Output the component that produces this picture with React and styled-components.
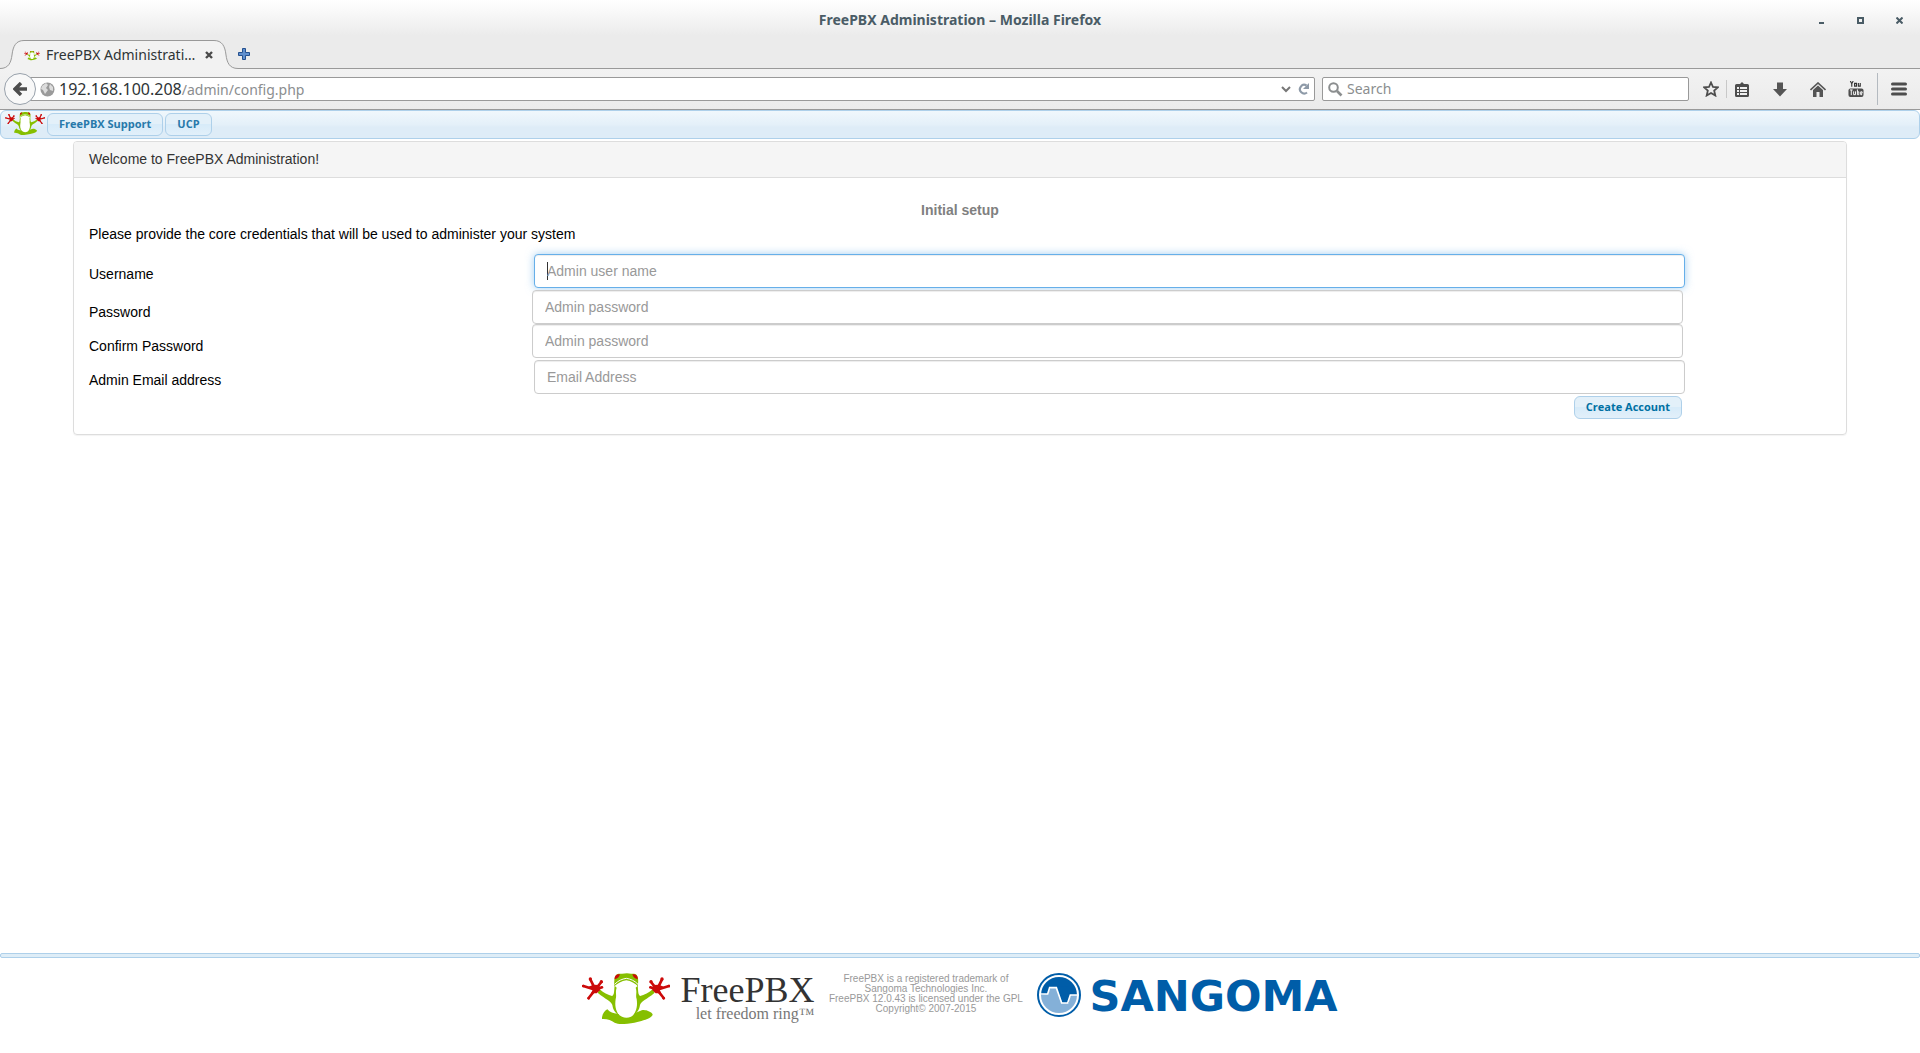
import React from 'react';
import styled, { createGlobalStyle, css } from 'styled-components';

const GlobalStyle = createGlobalStyle`
  * {
    box-sizing: border-box;
  }

  body {
    margin: 0;
    background-color: #fff;
    color: #000;
    font-family: 'Liberation Sans', Arial, sans-serif;
    font-size: 14px;
    line-height: 20px;
  }

  button,
  input {
    font-family: inherit;
  }
`;

const uiFont = "'Noto Sans', 'Open Sans', sans-serif";

const Window = styled.div`
  display: flex;
  flex-direction: column;
  min-height: 100vh;
`;

/* Browser chrome */

const Chrome = styled.header`
  background: linear-gradient(#fff 0, #ebebeb 36px);
  color: #2e3436;
  font-family: ${uiFont};
`;

const TitleBar = styled.div`
  display: grid;
  grid-template-columns: 1fr auto 1fr;
  align-items: center;
  height: 40px;
`;

const WindowTitle = styled.h1`
  grid-column: 2;
  margin: 0;
  color: #4a5c66;
  font-size: 14px;
  font-weight: 700;
  line-height: 40px;
`;

const WindowButtons = styled.div`
  display: flex;
  justify-content: flex-end;
  gap: 23px;
  padding-right: 13px;
`;

const IconButton = styled.button`
  display: flex;
  align-items: center;
  justify-content: center;
  width: ${({ $size }) => $size || 16}px;
  height: ${({ $size }) => $size || 16}px;
  padding: 0;
  border: 0;
  background: none;
  color: #4d4d4d;
`;

const TabStrip = styled.div`
  display: flex;
  align-items: stretch;
  height: 29px;
`;

const NewTabArea = styled.div`
  flex: 1;
  display: flex;
  align-items: center;
  border-bottom: 1px solid #999;
`;

const Tab = styled.div`
  display: flex;
  align-items: center;
  width: 190px;
  border-top: 1px solid #999;
  background: #f2f2f2;
`;

const TabLabel = styled.span`
  flex: 1;
  margin-left: 6px;
  font-size: 14px;
  line-height: 28px;
  white-space: nowrap;
`;

const NavBar = styled.div`
  display: flex;
  align-items: center;
  height: 41px;
  padding: 0 13px 0 4px;
  border-bottom: 1px solid #999;
  background: linear-gradient(#f2f2f2, #ebebeb);
`;

const BackButton = styled.button`
  z-index: 1;
  display: flex;
  align-items: center;
  justify-content: center;
  width: 32px;
  height: 32px;
  padding: 0;
  border: 1px solid #98a1ab;
  border-radius: 50%;
  background: #f8f8f8;
  color: #4d4d4d;
`;

const FieldBox = styled.div`
  display: flex;
  align-items: center;
  height: 24px;
  border: 1px solid #999;
  border-radius: 2px;
  background: #fff;
`;

const UrlBox = styled(FieldBox)`
  flex: 1;
  gap: 4px;
  margin-left: -7px;
  padding: 0 4px 0 10px;
`;

const Url = styled.span`
  flex: 1;
  font-size: 16px;
  line-height: 22px;
  color: #2e3436;
`;

const UrlPath = styled.span`
  color: #8b8e8f;
  font-size: 14px;
`;

const SearchBox = styled(FieldBox)`
  width: 367px;
  margin-left: 7px;
  padding: 0 5px;
  gap: 4px;
`;

const SearchInput = styled.input`
  flex: 1;
  min-width: 0;
  padding: 0;
  border: 0;
  outline: 0;
  background: none;
  font-size: 14px;
  line-height: 22px;

  &::placeholder {
    color: #8b8e8f;
    opacity: 1;
  }
`;

const Tools = styled.div`
  display: flex;
  align-items: center;
  gap: 22px;
  margin-left: 14px;
`;

const ToolGroup = styled.div`
  display: flex;
  align-items: center;
  gap: ${({ $gap }) => $gap}px;
`;

const Separator = styled.div`
  width: 1px;
  height: ${({ $tall }) => ($tall ? 32 : 18)}px;
  background: ${({ $tall }) => ($tall ? '#b4bac0' : '#c8c8c8')};
`;

/* FreePBX page */

const MenuBar = styled.nav`
  display: flex;
  align-items: flex-start;
  gap: 2px;
  height: 29px;
  padding: 1px 4px;
  border: 1px solid #aed0ea;
  border-radius: 6px;
  background: linear-gradient(#f0f7fc 0, #e4f0f9 50%, #deecf7 60%, #deecf7);
`;

const blueButton = css`
  border: 1px solid #aed0ea;
  border-radius: 6px;
  background: linear-gradient(#e3f0f9 0, #e3f0f9 49%, #d7ebf9 50%, #e2f0fa);
  font-family: 'Open Sans', 'Noto Sans', sans-serif;
  font-size: 11px;
  font-weight: 700;
  line-height: 20px;
`;

const MenuLink = styled.a`
  ${blueButton}
  margin-top: 1px;
  padding: 0 11px 1px;
  color: #2779aa;
  text-decoration: none;
`;

const Content = styled.main`
  flex: 1;
  padding: 2px 73px 20px;
`;

const Panel = styled.section`
  border: 1px solid #ddd;
  border-radius: 4px;
  box-shadow: 0 1px 1px rgba(0, 0, 0, 0.05);
`;

const PanelHeading = styled.div`
  padding: 7px 15px 8px;
  border-bottom: 1px solid #ddd;
  border-radius: 3px 3px 0 0;
  background: #f5f5f5;
  color: #333;
`;

const PanelBody = styled.form`
  padding: 22px 15px 15px;
`;

const FormTitle = styled.h2`
  margin: 0;
  color: #808080;
  font-size: 14px;
  font-weight: 700;
  line-height: 20px;
  text-align: center;
`;

const Intro = styled.p`
  margin: 4px 0 8px;
`;

const Row = styled.div`
  display: grid;
  grid-template-columns: 443fr 1151fr 148fr;
  align-items: start;
`;

const Label = styled.label`
  padding-top: 12px;
`;

const TextInput = styled.input`
  width: 100%;
  height: 34px;
  padding: 6px 12px;
  border: 1px solid #ccc;
  border-radius: 4px;
  outline: 0;
  background: #fff;
  box-shadow: inset 0 1px 1px rgba(0, 0, 0, 0.075);
  color: #555;
  font-size: 14px;
  line-height: 20px;

  ${({ $inset }) => $inset && css`
    margin: 2px 0 2px 2px;
  `}

  &::placeholder {
    color: #999;
    opacity: 1;
  }

  &:focus {
    border-color: #66afe9;
    /* thin caret at the start of the empty field */
    background: linear-gradient(#333, #333) 12px center / 1px 18px no-repeat #fff;
    box-shadow: inset 0 1px 1px rgba(0, 0, 0, 0.075), 0 0 8px rgba(102, 175, 233, 0.6);
    caret-color: transparent;
  }

  &:focus:not(:placeholder-shown) {
    background: #fff;
    caret-color: auto;
  }
`;

const SubmitButton = styled.button`
  ${blueButton}
  grid-column: 2;
  justify-self: end;
  margin-right: 1px;
  padding: 0 11px 1px;
  color: #0070a3;
`;

const FooterRule = styled.div`
  height: 5px;
  border: 1px solid #aed0ea;
  border-radius: 2px;
  background: #deedf7;
`;

const Footer = styled.footer`
  display: flex;
  align-items: flex-start;
  justify-content: center;
  gap: 10px;
  height: 95px;
  padding-top: 15px;
`;

const Brand = styled.div`
  display: flex;
  gap: 10px;
`;

const BrandText = styled.div`
  padding-top: 1px;
  font-family: 'Liberation Serif', 'Times New Roman', serif;
  text-align: right;
`;

const BrandName = styled.div`
  color: #333;
  font-size: 36px;
  line-height: 32px;
`;

const Tagline = styled.div`
  color: #777;
  font-size: 16px;
  line-height: 16px;
`;

const Legal = styled.p`
  min-width: 203px;
  margin: 1px 0 0;
  color: #999;
  font-size: 10px;
  line-height: 10px;
  text-align: center;
`;

const Sangoma = styled.div`
  display: flex;
  align-items: flex-start;
  gap: 8px;
  color: #005da8;
  font-family: 'DejaVu Sans', sans-serif;
  font-size: 43px;
  font-weight: 700;
  line-height: 46px;
`;

const Hand = () => (
  <g>
    <path d="M40 50L4 39M40 50L25 19M40 50L58 27M40 50L60 43M40 50L20 75" stroke="#cc0a0a" strokeWidth="8" strokeLinecap="round" />
    <path d="M20 41L34 35L52 36L54 52L44 61L27 61L33 49Z" fill="#cc0a0a" />
    <circle cx="4" cy="39" r="4" fill="#cc0a0a" />
    <circle cx="25" cy="18" r="5" fill="#cc0a0a" />
    <circle cx="58" cy="26" r="5" fill="#cc0a0a" />
    <circle cx="20" cy="76" r="4" fill="#cc0a0a" />
  </g>
);

const Arm = () => (
  <path
    d="M53 49C62 58 80 67 90 69C98 66 96 50 98 38L104 44C99 58 105 66 101 78C98 98 101 112 111 127C97 118 93 108 91 96C88 84 72 80 47 59Z"
    fill="#86bf00"
  />
);

const Frog = ({ width, height }) => (
  <svg width={width} height={height} viewBox="0 0 264 153" fill="none" aria-hidden="true">
    <path d="M60 133C62 120 70 112 76 109C84 119 94 121 106 122C130 128 156 124 172 115C182 109 188 111 193 112C202 116 212 119 212 126C203 139 184 142 166 147C146 153 112 156 98 149C88 142 76 137 60 138Z" fill="#86bf00" />
    <path d="M104 38C94 56 95 84 98 98C102 116 110 126 120 131Q133 137 147 131C157 126 165 112 168 98C170 84 172 56 161 38C148 14 118 14 104 38Z" fill="#fff" />
    <Arm />
    <g transform="translate(265 0) scale(-1 1)">
      <Arm />
    </g>
    <path d="M97 40C97 28 95 14 103 5C110 0 117 4 120 2C130 0 140 0 147 2C152 3 158 0 164 6C171 16 168 28 168 40C160 32 147 24 133 22C119 24 106 32 97 40Z" fill="#86bf00" />
    <path d="M98 34C108 23 120 18 133 16C146 18 158 23 168 34" stroke="#fff" strokeWidth="3" />
    <path d="M98 19C97 8 104 3 114 4C112 12 107 17 98 19Z" fill="#cc0a0a" />
    <path d="M167 19C168 8 161 3 151 4C153 12 158 17 167 19Z" fill="#cc0a0a" />
    <Hand />
    <g transform="translate(265 0) scale(-1 1)">
      <Hand />
    </g>
  </svg>
);

const TabCurve = ({ flip }) => (
  <svg width="24" height="29" viewBox="0 0 24 29" transform={flip ? 'scale(-1 1)' : undefined} aria-hidden="true">
    <path d="M0 28.500C9 28.500 11 22 12 15C13 6 16 0.500 24 0.500V29H0Z" fill="#f2f2f2" />
    <path d="M0 28.500C9 28.500 11 22 12 15C13 6 16 0.500 24 0.500" fill="none" stroke="#999" />
  </svg>
);

const fields = [
  { id: 'username', label: 'Username', placeholder: 'Admin user name', type: 'text', inset: true, focus: true },
  { id: 'password1', label: 'Password', placeholder: 'Admin password', type: 'password' },
  { id: 'password2', label: 'Confirm Password', placeholder: 'Admin password', type: 'password' },
  { id: 'email', label: 'Admin Email address', placeholder: 'Email Address', type: 'text', inset: true },
];

const BrowserChrome = () => (
  <Chrome>
    <TitleBar>
      <WindowTitle>FreePBX Administration – Mozilla Firefox</WindowTitle>
      <WindowButtons>
        <IconButton aria-label="Minimize">
          <svg width="7" height="7"><path d="M1 5h5v2H1z" fill="#4a5c66" /></svg>
        </IconButton>
        <IconButton aria-label="Maximize">
          <svg width="7" height="7"><path d="M1 1h5v5H1z" fill="none" stroke="#4a5c66" strokeWidth="2" /></svg>
        </IconButton>
        <IconButton aria-label="Close window">
          <svg width="7" height="7"><path d="M0.500 0.500L6.500 6.500M6.500 0.500L0.500 6.500" stroke="#4a5c66" strokeWidth="2" /></svg>
        </IconButton>
      </WindowButtons>
    </TitleBar>
    <TabStrip>
      <TabCurve />
      <Tab>
        <Frog width={16} height={11} />
        <TabLabel>FreePBX Administrati…</TabLabel>
        <IconButton aria-label="Close tab" $size={10}>
          <svg width="8" height="8"><path d="M1 1L7 7M7 1L1 7" stroke="#4a4a4a" strokeWidth="2.400" /></svg>
        </IconButton>
      </Tab>
      <TabCurve flip />
      <NewTabArea>
        <IconButton aria-label="New tab" $size={12}>
          <svg width="12" height="12"><path d="M4.500 0.500h3v4h4v3h-4v4h-3v-4h-4v-3h4z" fill="#5f8fce" stroke="#24508f" /></svg>
        </IconButton>
      </NewTabArea>
    </TabStrip>
    <NavBar>
      <BackButton aria-label="Back">
        <svg width="14" height="14"><path d="M8 1L2 7L8 13M2 7H14" fill="none" stroke="currentColor" strokeWidth="3.400" /></svg>
      </BackButton>
      <UrlBox>
        <svg width="15" height="15" viewBox="0 0 15 15">
          <circle cx="7.500" cy="7.500" r="7" fill="#9a9a9a" />
          <path d="M2 4L6 1L8 3L6 6L8 8L5 12L3 8L1 7ZM10 2L13 5L13 9L10 8L9 5Z" fill="#dcdcdc" />
        </svg>
        <Url>192.168.100.208<UrlPath>/admin/config.php</UrlPath></Url>
        <IconButton aria-label="Show history" $size={14}>
          <svg width="10" height="7"><path d="M1 1L5 5L9 1" fill="none" stroke="#777" strokeWidth="2" /></svg>
        </IconButton>
        <IconButton aria-label="Reload" $size={13}>
          <svg width="12" height="12"><path d="M9 9.500A4.300 4.300 0 1 1 8.500 2.500" fill="none" stroke="#8e9aa8" strokeWidth="2.200" /><path d="M11 0V6H5Z" fill="#8e9aa8" /></svg>
        </IconButton>
      </UrlBox>
      <SearchBox>
        <svg width="15" height="15"><circle cx="5.500" cy="5.500" r="4.300" fill="none" stroke="#8b8e8f" strokeWidth="2" /><path d="M9 9L13.500 13.500" stroke="#8b8e8f" strokeWidth="2.600" /></svg>
        <SearchInput aria-label="Search" placeholder="Search" />
      </SearchBox>
      <Tools>
        <ToolGroup $gap={7}>
          <IconButton aria-label="Bookmark this page">
            <svg width="16" height="16"><path d="M8 1.500L10 6L14.800 6.400L11.200 9.600L12.300 14.500L8 12L3.700 14.500L4.800 9.600L1.200 6.400L6 6Z" fill="none" stroke="#4d4d4d" strokeWidth="1.800" /></svg>
          </IconButton>
          <Separator />
          <IconButton aria-label="Show bookmarks">
            <svg width="14" height="15"><path d="M5 2L7 0L9 2H12.500Q14 2 14 3.500V13.500Q14 15 12.500 15H1.500Q0 15 0 13.500V3.500Q0 2 1.500 2Z" fill="#4d4d4d" /><path d="M2 5h2v2H2zM5 5h7v2H5zM2 8h2v2H2zM5 8h7v2H5zM2 11h2v2H2zM5 11h7v2H5z" fill="#f0f0f0" /></svg>
          </IconButton>
        </ToolGroup>
        <IconButton aria-label="Downloads">
          <svg width="14" height="15"><path d="M4 0.500H10V7H14L7 14.500L0 7H4Z" fill="#555" /></svg>
        </IconButton>
        <IconButton aria-label="Home">
          <svg width="16" height="15"><path d="M0.500 8L8 1L15.500 8" fill="none" stroke="#555" strokeWidth="1.600" /><path d="M3 8L8 3.500L13 8V15H9.500V10H6.500V15H3Z" fill="#555" /></svg>
        </IconButton>
        <ToolGroup $gap={13}>
          <IconButton aria-label="YouTube">
            <svg width="16" height="16" viewBox="0 0 16 17">
              <path d="M2 0L3.500 3V6M5 0L3.500 3M6.500 2.500h2v3h-2zM10.500 2v3.500h2V2" fill="none" stroke="#333" strokeWidth="1.200" />
              <rect y="8" width="16" height="9" rx="2" fill="#4d4d4d" />
              <path d="M1.500 9.500h3M3 9.500V15M5.500 11v3.500h2V11M9.500 9v5.500h1.500V11.500H9.500M14.500 14.500H13V11.500h1.500V13H13" fill="none" stroke="#fff" />
            </svg>
          </IconButton>
          <Separator $tall />
          <IconButton aria-label="Open menu">
            <svg width="16" height="14"><path d="M1.500 2h13M1.500 7h13M1.500 12h13" stroke="#4d4d4d" strokeWidth="3" strokeLinecap="round" /></svg>
          </IconButton>
        </ToolGroup>
      </Tools>
    </NavBar>
  </Chrome>
);

const App = () => {
  return (
    <Window>
      <GlobalStyle />
      <BrowserChrome />
      <MenuBar>
        <Frog width={40} height={23} />
        <MenuLink href="#support">FreePBX Support</MenuLink>
        <MenuLink href="#ucp">UCP</MenuLink>
      </MenuBar>
      <Content>
        <Panel>
          <PanelHeading>Welcome to FreePBX Administration!</PanelHeading>
          <PanelBody onSubmit={(e) => e.preventDefault()}>
            <FormTitle>Initial setup</FormTitle>
            <Intro>Please provide the core credentials that will be used to administer your system</Intro>
            {fields.map((field) => (
              <Row key={field.id}>
                <Label htmlFor={field.id}>{field.label}</Label>
                <TextInput
                  id={field.id}
                  type={field.type}
                  placeholder={field.placeholder}
                  autoFocus={field.focus}
                  $inset={field.inset}
                />
              </Row>
            ))}
            <Row>
              <SubmitButton type="submit">Create Account</SubmitButton>
            </Row>
          </PanelBody>
        </Panel>
      </Content>
      <FooterRule />
      <Footer>
        <Brand>
          <Frog width={88} height={51} />
          <BrandText>
            <BrandName>FreePBX</BrandName>
            <Tagline>let freedom ring™</Tagline>
          </BrandText>
        </Brand>
        <Legal>
          FreePBX is a registered trademark of<br />
          Sangoma Technologies Inc.<br />
          FreePBX 12.0.43 is licensed under the GPL<br />
          Copyright© 2007-2015
        </Legal>
        <Sangoma>
          <svg width="44" height="44" viewBox="0 0 132 132" aria-hidden="true">
            <circle cx="66" cy="66" r="63" fill="#fff" stroke="#005da8" strokeWidth="6" />
            <path d="M12 66A54 54 0 0 1 120 66H106L96 88H76L60 46H44L34 64Z" fill="#005da8" />
            <path d="M12 66A54 54 0 0 0 120 66H102L92 90H76L58 42H42L32 64Z" fill="#84b0d8" />
            <path d="M76 90L60 50V40H96V90Z" fill="#005da8" />
            <path d="M10 63H32L38 44H58L74 90H92L100 66H122" fill="none" stroke="#fff" strokeWidth="5" />
          </svg>
          SANGOMA
        </Sangoma>
      </Footer>
    </Window>
  );
};

export default App;
